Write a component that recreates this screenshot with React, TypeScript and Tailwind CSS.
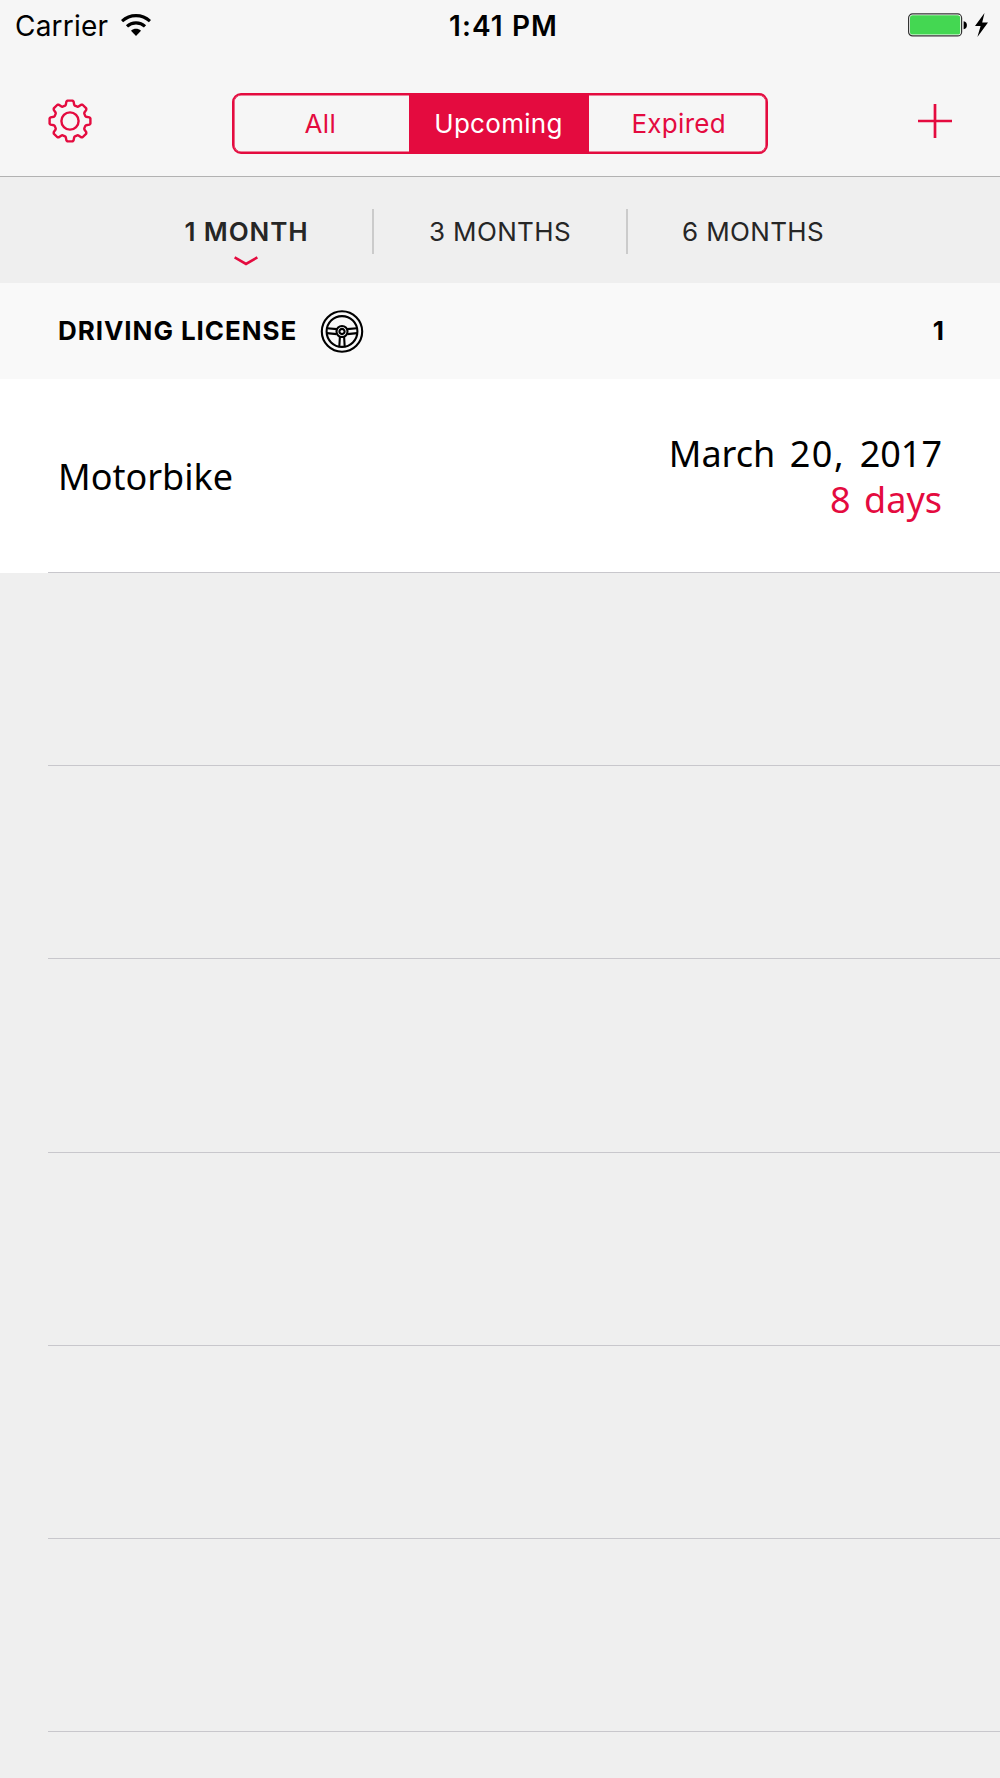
import React, { useState } from "react";

const filters = [
  { label: "All", style: "w-[174px] pr-[2px]" },
  { label: "Upcoming", style: "w-[180px] pr-2" },
  { label: "Expired", style: "w-[176px] pl-[2px]" },
];

const periods = [
  { label: "1 MONTH", style: "w-[253px] pl-[2px]" },
  { label: "3 MONTHS", style: "w-[254px] border-l-2" },
  { label: "6 MONTHS", style: "w-[252px] border-l-2" },
];

// Eight identical teeth around the origin, joined by short valleys
function gearPath() {
  const tooth = [
    [-4.9, -15.3],
    [-4.2, -16.2],
    [-3.6, -19.4],
    [-2.6, -20.4],
    [2.6, -20.4],
    [3.6, -19.4],
    [4.2, -16.2],
    [4.9, -15.3],
  ];
  const points: string[] = [];
  for (let i = 0; i < 8; i++) {
    const a = (i * Math.PI) / 4;
    tooth.forEach(([x, y]) => {
      const px = x * Math.cos(a) - y * Math.sin(a);
      const py = x * Math.sin(a) + y * Math.cos(a);
      points.push(`${px.toFixed(2)} ${py.toFixed(2)}`);
    });
  }
  return `M${points.join("L")}Z`;
}

function GearIcon() {
  return (
    <svg
      className="block h-11 w-11"
      viewBox="-22 -22 44 44"
      fill="none"
      stroke="#e40b3f"
      strokeWidth="2.4"
      strokeLinejoin="round"
    >
      <path d={gearPath()} />
      <circle r="8.6" />
    </svg>
  );
}

function WheelIcon() {
  return (
    <svg
      className="block h-11 w-11"
      viewBox="-22 -22.5 44 44"
      fill="none"
      stroke="#000"
      strokeWidth="2.1"
    >
      <circle r="20.2" />
      <circle r="15.4" />
      <circle r="5.5" />
      <circle r="2.6" />
      <path d="M-15 -3.3L-5 -2.4M15 -3.3L5 -2.4M-15.3 1.6L-5.2 2.6M15.3 1.6L5.2 2.6M-2.1 5.2L-2.7 15.2M2.1 5.2L2.7 15.2" />
    </svg>
  );
}

function StatusBar() {
  return (
    <div className="flex h-[50px] items-center pl-[15px] pr-3 text-[28px] leading-[50px]">
      <div className="flex w-[434px] shrink-0 items-center">
        <span className="pt-px tracking-[0.2px]">Carrier</span>
        <svg className="ml-[13px] h-[22px] w-[30px]" viewBox="0 0 30 22">
          <g fill="none" stroke="#000" strokeWidth="3.2">
            <path d="M1 7.2C9 -0.2 21 -0.2 29 7.2" />
            <path d="M6 12.4C11 7.8 19 7.8 24 12.4" />
          </g>
          <path d="M10 16.8C13 14.2 17 14.2 20 16.8L15 22Z" />
        </svg>
      </div>
      <span className="whitespace-nowrap pt-px font-semibold tracking-[1.1px]">
        1:41 PM
      </span>
      <svg className="ml-auto h-6 w-20" viewBox="0 0 80 24">
        <rect x="0.6" y="0.9" width="53" height="22" rx="4" fill="#fff" stroke="#333" strokeWidth="1.2" />
        <rect x="2" y="2.3" width="50.2" height="19.2" rx="2.6" fill="#44d752" />
        <path d="M55.6 8.2C60 8.6 60 15.8 55.6 16.2Z" />
        <path d="M76.5 0L67 13H72.6L69.4 24L80 9.6H74.2Z" />
      </svg>
    </div>
  );
}

function App() {
  const [filter, setFilter] = useState("Upcoming");
  const [period, setPeriod] = useState("1 MONTH");

  return (
    <div className="flex h-[1778px] w-[1000px] flex-col overflow-hidden bg-[#efefef] font-['Inter','Liberation_Sans',sans-serif] text-black">
      <header className="h-[177px] shrink-0 border-b border-[#b2b2b2] bg-[#f6f6f6]">
        <StatusBar />
        <div className="flex items-start justify-between pl-12 pr-[48px] pt-[43px]">
          <button className="mt-[6px] w-[184px]">
            <GearIcon />
          </button>
          <div className="flex h-[61px] w-[536px] overflow-hidden rounded-[9px] border-2 border-[#e40b3f] shadow-[inset_0_0_0_0.6px_#e40b3f]">
            {filters.map((f) => (
              <button
                key={f.label}
                onClick={() => setFilter(f.label)}
                className={`grow ${f.style} text-[26px] tracking-[0.3px] ${
                  filter === f.label
                    ? "bg-[#e40b3f] pl-[7px] text-white"
                    : "text-[#e40b3f]"
                }`}
              >
                {f.label}
              </button>
            ))}
          </div>
          <button className="mt-[11px] flex w-[184px] justify-end">
            <svg className="block h-[34px] w-[34px]" viewBox="0 0 34 34" stroke="#e40b3f" strokeWidth="2.7">
              <path d="M17 0V34M0 17H34" />
            </svg>
          </button>
        </div>
      </header>

      <nav className="flex h-[106px] shrink-0 pl-[119px] pt-8 text-[26px] text-[#262626]">
        {periods.map((p) => (
          <button
            key={p.label}
            onClick={() => setPeriod(p.label)}
            className={`relative h-[45px] border-[#cbcbcb] ${p.style} ${
              period === p.label
                ? "font-semibold tracking-[0.9px]"
                : "tracking-[0.35px]"
            }`}
          >
            {p.label}
            {period === p.label && (
              <svg
                className="absolute left-[115px] top-[47px] h-[10px] w-6"
                viewBox="0 0 24 10"
                fill="none"
                stroke="#e40b3f"
                strokeWidth="2.6"
              >
                <path d="M0.6 1.4L12 8L23.4 1.4" />
              </svg>
            )}
          </button>
        ))}
      </nav>

      <section>
        <div className="flex h-24 items-center justify-between bg-[#f9f9f9] pl-[58px] pr-14 text-[26px] font-bold">
          <div className="flex items-center">
            <span className="pb-[2px] tracking-[0.95px]">DRIVING LICENSE</span>
            <span className="ml-[23px]">
              <WheelIcon />
            </span>
          </div>
          <span className="pb-[2px]">1</span>
        </div>

        <ul className="font-['Noto_Sans','Open_Sans',sans-serif]">
          <li className="-mb-px flex h-[194px] items-center justify-between bg-white pl-[58px] pr-[58px] pt-[2px] text-[36px]">
            <span>Motorbike</span>
            <div className="text-right leading-[46px]">
              <div className="[word-spacing:5px]">
                March <span className="tracking-[1.6px]">20,</span> 2017
              </div>
              <div className="text-[#e40b3f] [word-spacing:4px]">8 days</div>
            </div>
          </li>
        </ul>

        {/* Empty rows fill the rest of the table */}
        <div className="pl-12">
          {[1, 2, 3, 4, 5, 6, 7].map((row) => (
            <div key={row} className="h-[193.2px] border-t border-[#c8c7cc]" />
          ))}
        </div>
      </section>
    </div>
  );
}

export default App;
